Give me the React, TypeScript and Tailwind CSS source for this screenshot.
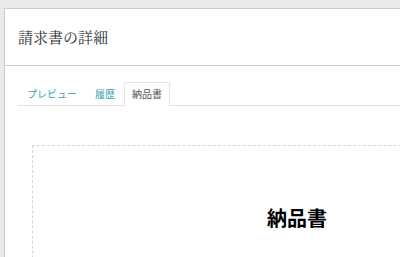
import React from "react";

export default function App() {
  return (
    <div className="w-[400px] h-[257px] overflow-hidden bg-[#e9e9e9] pl-[4px] pt-[8px]" style={{ fontFamily: '"Noto Sans CJK JP", "Noto Sans", sans-serif' }}>
      <div className="w-[700px] h-[400px] bg-white border-l border-t border-[#cccccc]">
        <div className="h-[57px] flex items-center pl-[13px] border-b border-[#cccccc]">
          <h1 className="text-[15px] text-[#333333]" style={{ fontFamily: '"Noto Serif CJK JP", "Liberation Serif", serif' }}>
            請求書の詳細
          </h1>
        </div>
        <div className="pt-[16px] pl-[13px]">
          <div className="flex border-b border-[#e3e3e3] text-[10px] leading-none">
            <div className="px-[8px] h-[23px] flex items-center text-[#3aa3b3] border border-transparent">プレビュー</div>
            <div className="px-[8px] h-[23px] flex items-center text-[#3aa3b3] border border-transparent">履歴</div>
            <div className="px-[7px] h-[24px] -mb-px flex items-center text-[#555555] bg-white border border-[#e3e3e3] border-b-white rounded-t-[2px]">納品書</div>
          </div>
          <div className="mt-[39px] ml-[14px] w-[530px] h-[300px] border border-dashed border-[#d6d6d6] flex justify-center">
            <div className="mt-[62px] text-[20px] font-bold text-black leading-none">納品書</div>
          </div>
        </div>
      </div>
    </div>
  );
}
